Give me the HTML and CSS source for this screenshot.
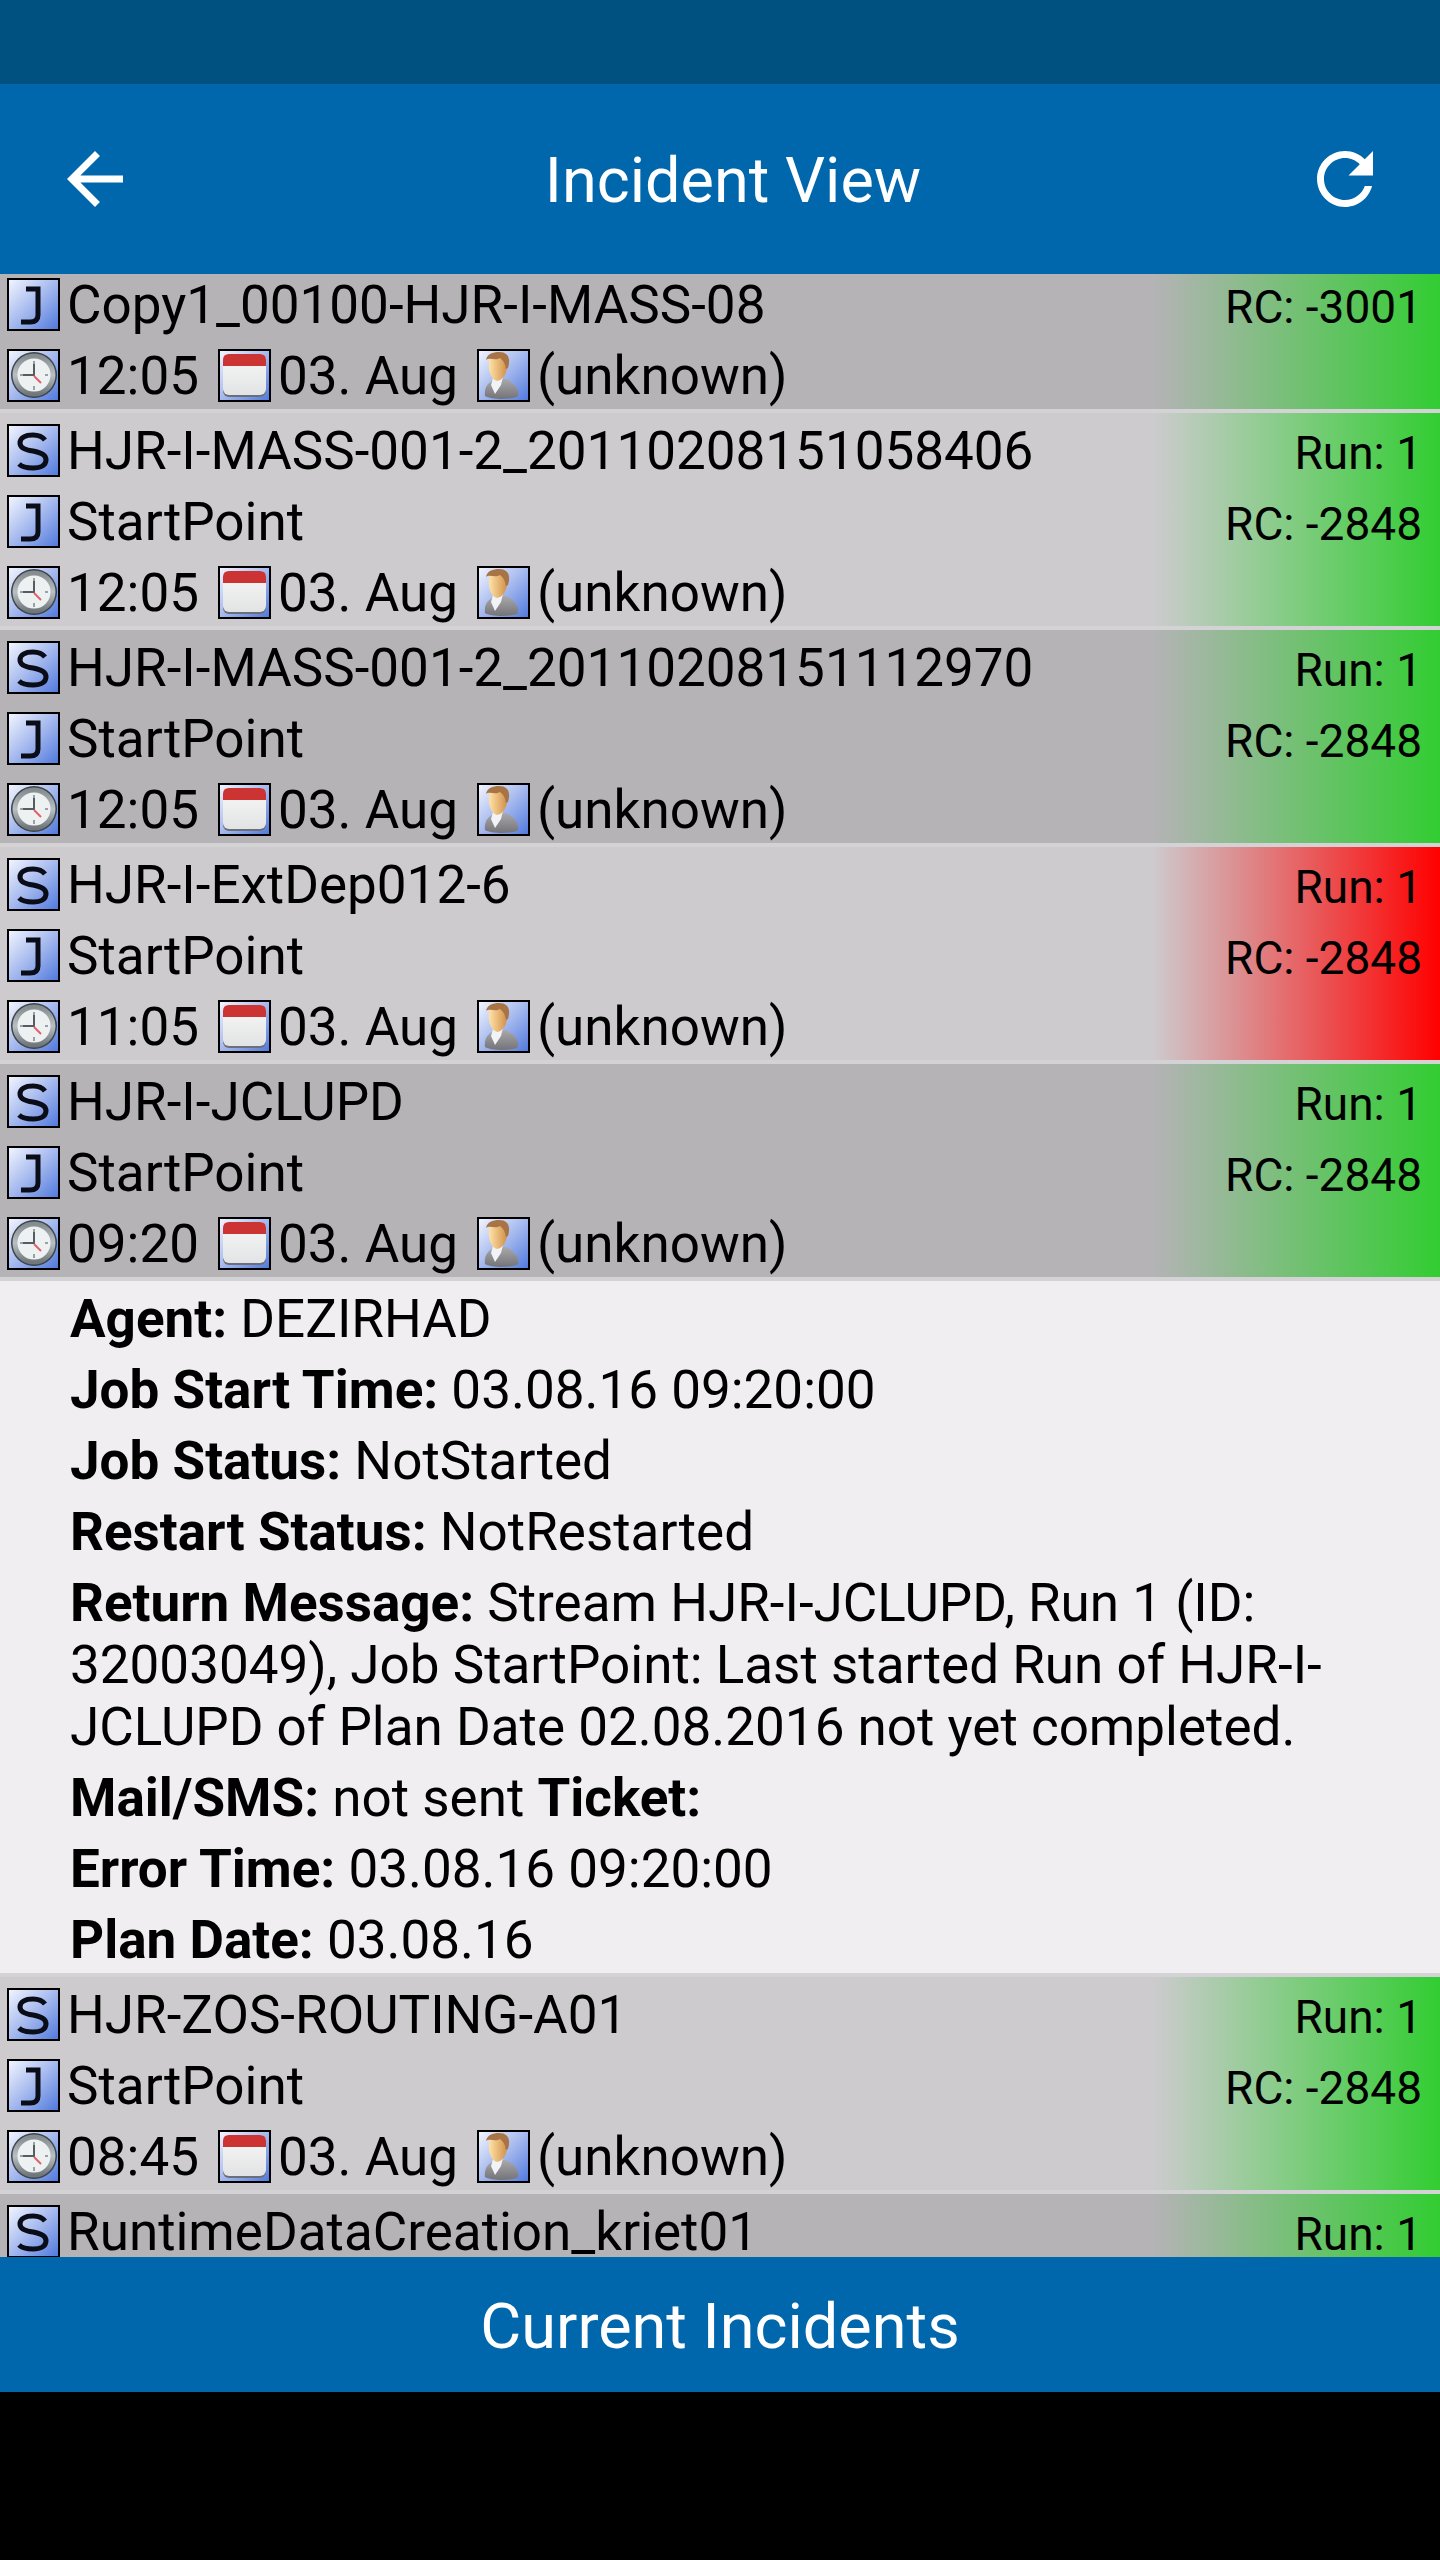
FILE: index.html
```
<!DOCTYPE html>
<html lang="en">
<head>
    <meta charset="UTF-8">
    <meta name="viewport" content="width=device-width, initial-scale=1.0">
    <title>Incident View</title>
    <link rel="stylesheet" href="styles.css">
</head>
<body>
    <!-- Shared icons -->
    <svg class="sprite" aria-hidden="true">
        <defs>
            <linearGradient id="tile" x1="0" y1="0" x2="1" y2="1">
                <stop offset="0" stop-color="#f4f7ff"/>
                <stop offset="0.5" stop-color="#a5b9ee"/>
                <stop offset="1" stop-color="#4f78dc"/>
            </linearGradient>
            <linearGradient id="rim" x1="0" y1="0" x2="0" y2="1">
                <stop offset="0" stop-color="#858c90"/>
                <stop offset="0.5" stop-color="#b9c0c3"/>
                <stop offset="1" stop-color="#70777b"/>
            </linearGradient>
            <linearGradient id="sheet" x1="0" y1="0" x2="0" y2="1">
                <stop offset="0" stop-color="#f8f8f8"/>
                <stop offset="1" stop-color="#e2e3e4"/>
            </linearGradient>
            <linearGradient id="suit" x1="0" y1="0" x2="0" y2="1">
                <stop offset="0" stop-color="#a9a9ac"/>
                <stop offset="1" stop-color="#747478"/>
            </linearGradient>
            <linearGradient id="skin" x1="0" y1="0" x2="1" y2="0">
                <stop offset="0" stop-color="#ffe3a8"/>
                <stop offset="1" stop-color="#d0904a"/>
            </linearGradient>
        </defs>
        <symbol id="icon-stream" viewBox="0 0 53 53">
            <rect x="1" y="1" width="51" height="51" fill="url(#tile)" stroke="#000" stroke-width="2"/>
            <path d="M38 16C35 12 31 11 26 11C18 11 13 14 13 19C13 24 18 26 26 27C35 29 39 31 39 36C39 41 34 44 26 44C20 44 15 43 12 40" fill="none" stroke="#0a0d18" stroke-width="5"/>
        </symbol>
        <symbol id="icon-job" viewBox="0 0 53 53">
            <rect x="1" y="1" width="51" height="51" fill="url(#tile)" stroke="#000" stroke-width="2"/>
            <path d="M19 11H31V37C31 42 28 44 23 44H14" fill="none" stroke="#0a0d18" stroke-width="5"/>
        </symbol>
        <symbol id="icon-time" viewBox="0 0 53 53">
            <rect x="1" y="1" width="51" height="51" fill="url(#tile)" stroke="#000" stroke-width="2"/>
            <circle cx="27" cy="26" r="23" fill="#3d4347"/>
            <circle cx="27" cy="26" r="19" fill="#eef1f2" stroke="url(#rim)" stroke-width="5"/>
            <path d="M27 12V15M27 37V41M13 26H17M38 26H41" stroke="#9aa1a5" stroke-width="2"/>
            <path d="M27 15V27M16 26H27" stroke="#555d62" stroke-width="2"/>
            <path d="M27 27L34 34" stroke="#e0606a" stroke-width="2"/>
        </symbol>
        <symbol id="icon-date" viewBox="0 0 53 53">
            <rect x="1" y="1" width="51" height="51" fill="url(#tile)" stroke="#000" stroke-width="2"/>
            <rect x="5" y="7" width="43" height="41" rx="6" fill="#6b7078"/>
            <rect x="5" y="5" width="43" height="41" rx="6" fill="url(#sheet)"/>
            <path d="M5 17V11Q5 5 11 5H42Q48 5 48 11V17Z" fill="#cc3333"/>
        </symbol>
        <symbol id="icon-user" viewBox="0 0 53 53">
            <rect x="1" y="1" width="51" height="51" fill="url(#tile)" stroke="#000" stroke-width="2"/>
            <path d="M8 47C7 38 11 34 18 30L29 30C38 34 42 40 41 47C37 51 14 51 8 47Z" fill="url(#suit)"/>
            <path d="M16 29L26 28L24 36L18 45L14 36Z" fill="#f2f3f6"/>
            <path d="M12 12C14 6 29 6 30 14C31 22 27 31 20 32C13 30 11 20 12 12Z" fill="url(#skin)"/>
            <path d="M9 11C10 5 16 3 22 3C31 3 34 9 31 19L29 20C28 15 27 12 23 9C18 12 13 8 9 11Z" fill="#a87345"/>
        </symbol>
    </svg>

    <div class="status-bar"></div>

    <header class="app-bar">
        <button class="icon-btn" type="button" aria-label="Back">
            <svg viewBox="0 0 24 24"><path d="M20 11H7.83l5.59-5.59L12 4l-8 8 8 8 1.41-1.41L7.83 13H20v-2z"/></svg>
        </button>
        <h1>Incident View</h1>
        <button class="icon-btn" type="button" aria-label="Refresh">
            <svg viewBox="0 0 24 24"><path d="M17.65 6.35C16.2 4.9 14.21 4 12 4c-4.42 0-7.99 3.58-7.99 8s3.57 8 7.99 8c3.73 0 6.84-2.55 7.73-6h-2.08c-.82 2.33-3.04 4-5.65 4-3.31 0-6-2.69-6-6s2.69-6 6-6c1.66 0 3.14.69 4.22 1.78L13 11h7V4l-2.35 2.35z"/></svg>
        </button>
    </header>

    <main class="incidents">
        <article class="incident dark scrolled">
            <div class="line"><svg class="icon"><use href="#icon-job"/></svg><span class="text">Copy1_00100-HJR-I-MASS-08</span><span class="code">RC: -3001</span></div>
            <div class="line"><svg class="icon"><use href="#icon-time"/></svg><span class="text">12:05</span><svg class="icon"><use href="#icon-date"/></svg><span class="text">03. Aug</span><svg class="icon"><use href="#icon-user"/></svg><span class="text">(unknown)</span></div>
        </article>

        <article class="incident">
            <div class="line"><svg class="icon"><use href="#icon-stream"/></svg><span class="text">HJR-I-MASS-001-2_20110208151058406</span><span class="code">Run: 1</span></div>
            <div class="line"><svg class="icon"><use href="#icon-job"/></svg><span class="text">StartPoint</span><span class="code">RC: -2848</span></div>
            <div class="line"><svg class="icon"><use href="#icon-time"/></svg><span class="text">12:05</span><svg class="icon"><use href="#icon-date"/></svg><span class="text">03. Aug</span><svg class="icon"><use href="#icon-user"/></svg><span class="text">(unknown)</span></div>
        </article>

        <article class="incident dark">
            <div class="line"><svg class="icon"><use href="#icon-stream"/></svg><span class="text">HJR-I-MASS-001-2_20110208151112970</span><span class="code">Run: 1</span></div>
            <div class="line"><svg class="icon"><use href="#icon-job"/></svg><span class="text">StartPoint</span><span class="code">RC: -2848</span></div>
            <div class="line"><svg class="icon"><use href="#icon-time"/></svg><span class="text">12:05</span><svg class="icon"><use href="#icon-date"/></svg><span class="text">03. Aug</span><svg class="icon"><use href="#icon-user"/></svg><span class="text">(unknown)</span></div>
        </article>

        <article class="incident failed">
            <div class="line"><svg class="icon"><use href="#icon-stream"/></svg><span class="text">HJR-I-ExtDep012-6</span><span class="code">Run: 1</span></div>
            <div class="line"><svg class="icon"><use href="#icon-job"/></svg><span class="text">StartPoint</span><span class="code">RC: -2848</span></div>
            <div class="line"><svg class="icon"><use href="#icon-time"/></svg><span class="text">11:05</span><svg class="icon"><use href="#icon-date"/></svg><span class="text">03. Aug</span><svg class="icon"><use href="#icon-user"/></svg><span class="text">(unknown)</span></div>
        </article>

        <article class="incident dark">
            <div class="line"><svg class="icon"><use href="#icon-stream"/></svg><span class="text">HJR-I-JCLUPD</span><span class="code">Run: 1</span></div>
            <div class="line"><svg class="icon"><use href="#icon-job"/></svg><span class="text">StartPoint</span><span class="code">RC: -2848</span></div>
            <div class="line"><svg class="icon"><use href="#icon-time"/></svg><span class="text">09:20</span><svg class="icon"><use href="#icon-date"/></svg><span class="text">03. Aug</span><svg class="icon"><use href="#icon-user"/></svg><span class="text">(unknown)</span></div>
        </article>

        <section class="details">
            <p><b>Agent:</b> DEZIRHAD</p>
            <p><b>Job Start Time:</b> 03.08.16 09:20:00</p>
            <p><b>Job Status:</b> NotStarted</p>
            <p><b>Restart Status:</b> NotRestarted</p>
            <p><b>Return Message:</b> Stream HJR-I-JCLUPD, Run 1 (ID: 32003049), Job StartPoint: Last started Run of HJR-I-JCLUPD of Plan Date 02.08.2016 not yet completed.</p>
            <p><b>Mail/SMS:</b> not sent <b>Ticket:</b></p>
            <p><b>Error Time:</b> 03.08.16 09:20:00</p>
            <p><b>Plan Date:</b> 03.08.16</p>
        </section>

        <article class="incident">
            <div class="line"><svg class="icon"><use href="#icon-stream"/></svg><span class="text">HJR-ZOS-ROUTING-A01</span><span class="code">Run: 1</span></div>
            <div class="line"><svg class="icon"><use href="#icon-job"/></svg><span class="text">StartPoint</span><span class="code">RC: -2848</span></div>
            <div class="line"><svg class="icon"><use href="#icon-time"/></svg><span class="text">08:45</span><svg class="icon"><use href="#icon-date"/></svg><span class="text">03. Aug</span><svg class="icon"><use href="#icon-user"/></svg><span class="text">(unknown)</span></div>
        </article>

        <article class="incident dark">
            <div class="line"><svg class="icon"><use href="#icon-stream"/></svg><span class="text">RuntimeDataCreation_kriet01</span><span class="code">Run: 1</span></div>
        </article>
    </main>

    <footer class="tab-bar">Current Incidents</footer>
    <div class="nav-bar"></div>
</body>
</html>
```
FILE: styles.css
```
:root {
    --blue: #0067ac;
    --blue-dark: #005080;
    --row-light: #cdcbce;
    --row-dark: #b5b3b6;
    --line: #d3d2d4;
    --ok: #32cd32;
    --failed: #ff0000;
}

* {
    margin: 0;
    padding: 0;
    box-sizing: border-box;
}

body {
    height: 100vh;
    display: flex;
    flex-direction: column;
    font-family: Roboto, sans-serif;
    font-size: 53px;
    line-height: 62px;
    color: #000;
    background: #000;
}

.sprite {
    position: absolute;
    width: 0;
    height: 0;
}

.status-bar {
    flex: none;
    height: 84px;
    background: var(--blue-dark);
}

.app-bar {
    flex: none;
    height: 190px;
    padding: 0 53px;
    display: flex;
    align-items: center;
    justify-content: space-between;
    background: var(--blue);
    color: #fff;
}

h1 {
    padding: 4px 0 0 26px;
    font-size: 63px;
    font-weight: 400;
    line-height: 72px;
}

.icon-btn {
    width: 84px;
    height: 84px;
    border: none;
    background: none;
    cursor: pointer;
}

.icon-btn svg {
    display: block;
    width: 84px;
    height: 84px;
    fill: #fff;
}

.incidents {
    flex: 1;
    min-height: 0;
    overflow: hidden;
    background: var(--row-light);
}

.incident {
    --row: var(--row-light);
    --status: var(--ok);
    border-bottom: 4px solid var(--line);
    background: linear-gradient(to right, var(--row) 80%, var(--status)) padding-box;
}

.incident.dark {
    --row: var(--row-dark);
}

.incident.failed {
    --status: var(--failed);
}

/* first entry is partly scrolled under the app bar */
.incident.scrolled {
    margin-top: -7px;
}

.line {
    height: 71px;
    padding: 4px 18px 0 7px;
    display: flex;
    align-items: center;
}

.icon {
    flex: none;
    width: 53px;
    height: 53px;
    margin-right: 7px;
}

.text {
    margin-right: 19px;
    white-space: nowrap;
}

.code {
    margin-left: auto;
    padding-top: 4px;
    font-size: 46px;
    white-space: nowrap;
}

.details {
    padding: 0 17px 2px 70px;
    border-bottom: 4px solid var(--line);
    background: #f0eef1;
}

.details p {
    padding-top: 9px;
}

.details p:first-child {
    padding-top: 7px;
}

.tab-bar {
    flex: none;
    height: 135px;
    padding-top: 4px;
    display: flex;
    align-items: center;
    justify-content: center;
    font-size: 63px;
    background: var(--blue);
    color: #fff;
}

.nav-bar {
    flex: none;
    height: 168px;
}
```
